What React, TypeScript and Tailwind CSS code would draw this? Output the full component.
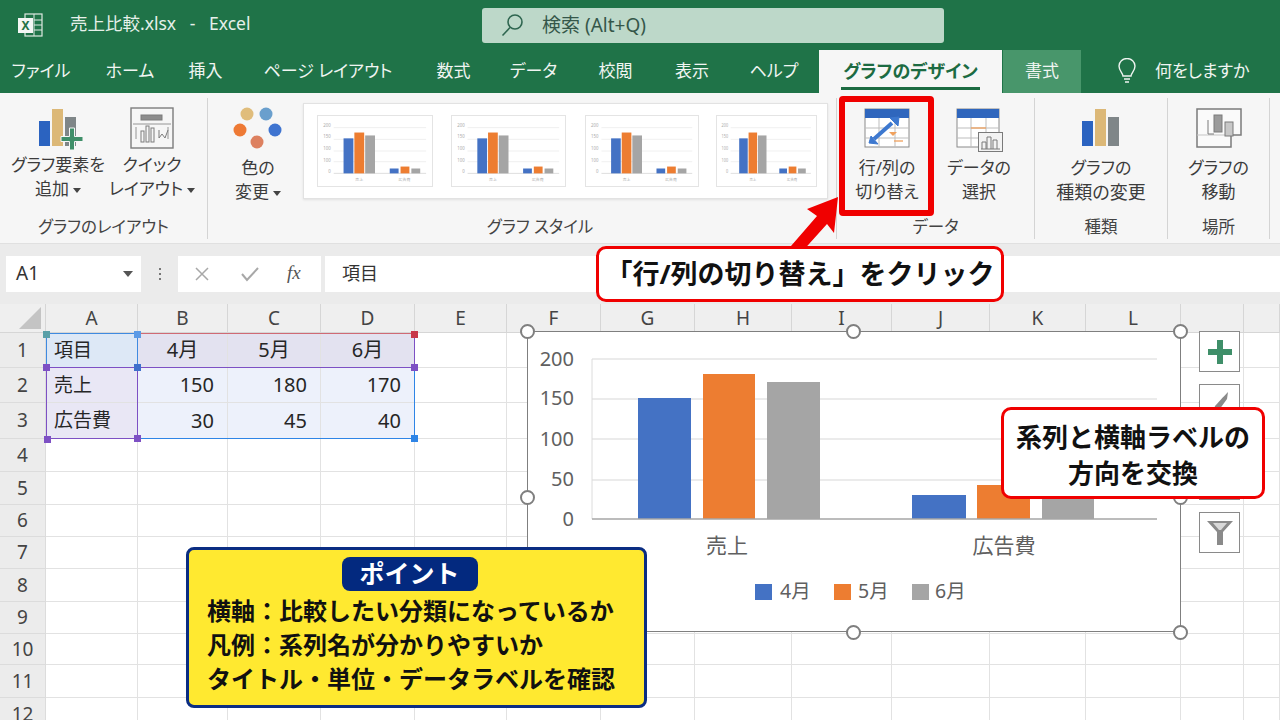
import React from "react";

const tabs = [
  { label: "ファイル", w: "w-[82px]" },
  { label: "ホーム", w: "w-[96px]" },
  { label: "挿入", w: "w-[55px]" },
  { label: "ページ レイアウト", w: "w-[190px]" },
  { label: "数式", w: "w-[61px]" },
  { label: "データ", w: "w-[99px]" },
  { label: "校閲", w: "w-[65px]" },
  { label: "表示", w: "w-[88px]" },
  { label: "ヘルプ", w: "w-[76px]" },
];

const columns = ["", "A", "B", "C", "D", "E", "F", "G", "H", "I", "J", "K", "L", "", ""];
const rowNumbers = [1, 2, 3, 4, 5, 6, 7, 8, 9, 10, 11, 12];

// tint of the highlighted data range, by row then column
const tints = [
  ["bg-[#dde8f6]", "bg-[#e3e2f0]", "bg-[#e3e2f0]", "bg-[#e3e2f0]"],
  ["bg-[#e9e7f5]", "bg-[#edf1fb]", "bg-[#edf1fb]", "bg-[#edf1fb]"],
  ["bg-[#e9e7f5]", "bg-[#edf1fb]", "bg-[#edf1fb]", "bg-[#edf1fb]"],
];

const cells = [
  [
    { text: "項目", cls: "pl-2 text-left text-[19px]" },
    { text: "4月", cls: "text-center" },
    { text: "5月", cls: "text-center" },
    { text: "6月", cls: "text-center" },
  ],
  [
    { text: "売上", cls: "pl-2 text-left text-[19px]" },
    { text: "150", cls: "pr-[13px] text-right" },
    { text: "180", cls: "pr-[13px] text-right" },
    { text: "170", cls: "pr-[13px] text-right" },
  ],
  [
    { text: "広告費", cls: "pl-2 text-left text-[19px]" },
    { text: "30", cls: "pr-[13px] text-right" },
    { text: "45", cls: "pr-[13px] text-right" },
    { text: "40", cls: "pr-[13px] text-right" },
  ],
];

const BLUE = "#4472c4";
const ORANGE = "#ed7d31";
const GRAY = "#a5a5a5";

const MiniChart = ({ width }: { width: number }) => (
  <svg width={width} height={72} viewBox="0 0 116 72" preserveAspectRatio="none" className="border border-[#e4e4e4] bg-white">
    {[12, 24, 36, 47].map((y) => (
      <line key={y} x1="16" x2="110" y1={y} y2={y} stroke="#efefef" strokeWidth="1" />
    ))}
    {["200", "150", "100", "100", "0"].map((t, i) => (
      <text key={i} x="13" y={11 + i * 12} fontSize="4.5" textAnchor="end" fill="#aaa">
        {t}
      </text>
    ))}
    <line x1="16" x2="110" y1="59" y2="59" stroke="#ddd" />
    <rect x="26" y="23" width="10" height="36" fill={BLUE} />
    <rect x="37" y="17" width="10" height="42" fill={ORANGE} />
    <rect x="48" y="20" width="10" height="39" fill={GRAY} />
    <rect x="73" y="54" width="9" height="5" fill={BLUE} />
    <rect x="84" y="52" width="9" height="7" fill={ORANGE} />
    <rect x="95" y="54" width="9" height="5" fill={GRAY} />
    <text x="42" y="67" fontSize="4" textAnchor="middle" fill="#aaa">売上</text>
    <text x="88" y="67" fontSize="4" textAnchor="middle" fill="#aaa">広告費</text>
  </svg>
);

const BarsIcon = () => (
  <svg width="38" height="38" viewBox="0 0 38 38">
    <rect x="0" y="12" width="11" height="25" fill="#2b63c0" />
    <rect x="13" y="0" width="11" height="37" fill="#dcb877" />
    <rect x="26" y="8" width="11" height="29" fill="#7f8688" />
  </svg>
);

const Caret = () => <span className="ml-1 inline-block border-x-[4px] border-t-[5px] border-x-transparent border-t-[#444] align-middle" />;

const RibbonButton = ({ icon, lines, caret, cls, textCls = "mt-[2px]" }: { icon: React.ReactNode; lines: React.ReactNode[]; caret?: boolean; cls: string; textCls?: string }) => (
  <div className={`flex flex-col items-center ${cls}`}>
    <div className="flex h-[56px] w-full items-center justify-center pt-[4px]">{icon}</div>
    <div className={`whitespace-nowrap text-center text-[17px] leading-[24px] text-[#3c3c3c] ${textCls}`}>
      <div>{lines[0]}</div>
      <div>
        {lines[1]}
        {caret && <Caret />}
      </div>
    </div>
  </div>
);

const Group = ({ label, cls, labelCls = "", children }: { label: string; cls: string; labelCls?: string; children: React.ReactNode }) => (
  <div className={`flex h-full shrink-0 flex-col border-r border-[#d4d4d4] ${cls}`}>
    <div className="flex h-[122px] items-start">{children}</div>
    <div className={`text-center text-[16.5px] leading-[24px] text-[#444] ${labelCls}`}>{label}</div>
  </div>
);

const Handle = ({ cls }: { cls: string }) => (
  <div className={`absolute h-[15px] w-[15px] rounded-full border-[2px] border-[#7f7f7f] bg-white ${cls}`} />
);

const Dot = ({ cls }: { cls: string }) => <div className={`absolute h-[7px] w-[7px] ${cls}`} />;

export default function App() {
  return (
    <div className="relative h-[720px] w-[1280px] overflow-hidden bg-white font-['Noto_Sans','Noto_Sans_CJK_JP',sans-serif] text-[#262626] [font-feature-settings:'palt']">
      {/* title bar */}
      <div className="flex h-[50px] items-center bg-[#1f7348] text-[#e6f0ea]">
        <svg width="26" height="24" viewBox="0 0 26 24" className="ml-[17px]">
          <rect x="8" y="1" width="17" height="22" fill="none" stroke="#dfe9e3" strokeWidth="1.2" />
          <path d="M17 1v22M17 7h8M17 12h8M17 17h8" stroke="#dfe9e3" strokeWidth="1" />
          <rect x="1" y="5" width="15" height="15" fill="#f4f7f5" />
          <text x="8.5" y="17" fontSize="12" fontWeight="700" textAnchor="middle" fill="#1f7348">X</text>
        </svg>
        <span className="ml-[27px] w-[412px] whitespace-pre pb-[3px] text-[17.5px]">売上比較.xlsx   -   Excel</span>
        <div className="flex h-[35px] w-[462px] items-center rounded-[3px] bg-[#bdd8c9] text-[#35574a]">
          <svg width="24" height="24" viewBox="0 0 24 24" className="ml-[19px]" fill="none" stroke="#2f6650" strokeWidth="1.6">
            <circle cx="14" cy="9" r="7" />
            <path d="M9 14.5 1.5 22.5" />
          </svg>
          <span className="ml-[17px] text-[19px]">検索 (Alt+Q)</span>
        </div>
      </div>

      {/* tabs */}
      <div className="flex h-[43px] items-stretch bg-[#1f7348] text-[17px] text-[#f0f5f2]">
        {tabs.map((t) => (
          <div key={t.label} className={`flex items-center justify-center whitespace-nowrap pb-[2px] ${t.w}`}>
            {t.label}
          </div>
        ))}
        <div className="ml-[7px] flex w-[183px] flex-col items-center bg-[#f6f6f6] pt-[9px]">
          <span className="border-b-[3px] border-[#1c6b42] px-[2px] pb-[3px] text-[18px] font-bold leading-[25px] text-[#1c6b42]">グラフのデザイン</span>
        </div>
        <div className="ml-px flex w-[78px] items-center justify-center bg-[#48966b] pb-[2px]">書式</div>
        <svg width="24" height="26" viewBox="0 0 24 26" className="ml-[34px] mt-[8px]" fill="none" stroke="#eef4f0" strokeWidth="1.4">
          <path d="M8 18c0-3-4-5-4-10a8 7.5 0 0 1 16 0c0 5-4 7-4 10z" />
          <path d="M9 21h6M10 24h4" />
        </svg>
        <div className="ml-[16px] flex items-center pb-[2px]">何をしますか</div>
      </div>

      {/* ribbon */}
      <div className="flex h-[150px] bg-[#f6f6f6] pb-[4px] pt-[5px]">
        <Group label="グラフのレイアウト" cls="w-[208px]">
          <RibbonButton
            cls="ml-[8px] w-[100px]"
            lines={["グラフ要素を", "追加"]}
            caret
            textCls="-mt-px"
            icon={
              <div className="relative">
                <BarsIcon />
                <svg width="24" height="24" viewBox="0 0 24 24" className="absolute left-[21px] top-[18px]">
                  <path d="M9.5 1h5v8.5H23v5h-8.500V23h-5v-8.500H1v-5h8.500z" fill="#3f8f69" stroke="#f6f6f6" strokeWidth="1" />
                </svg>
              </div>
            }
          />
          <RibbonButton
            cls="w-[88px]"
            lines={["クイック", "レイアウト"]}
            caret
            textCls="-mt-px"
            icon={
              <svg width="44" height="42" viewBox="0 0 44 42" fill="none" stroke="#7d7d7d">
                <rect x="1" y="1" width="42" height="40" strokeWidth="1.4" />
                <rect x="11" y="8" width="21" height="5" fill="#8d8d8d" />
                <path d="M3 17h38M6 20v12M38 20v12" strokeWidth="0.8" />
                <rect x="11" y="24" width="3" height="11" />
                <rect x="16" y="19" width="3" height="16" />
                <rect x="21" y="21" width="3" height="14" />
                <path d="M29 23v8l3-4 3 4 3-8" />
              </svg>
            }
          />
        </Group>

        <Group label="グラフ スタイル" cls="w-[629px]" labelCls="pl-[36px]">
          <RibbonButton
            cls="ml-[5px] w-[90px]"
            lines={["色の", "変更"]}
            caret
            icon={
              <svg width="50" height="46" viewBox="0 0 50 46">
                <circle cx="14" cy="9" r="6.500" fill="#e0bd7c" />
                <circle cx="33" cy="9" r="6.500" fill="#6a9fcd" />
                <circle cx="7" cy="25" r="6.500" fill="#ee7a35" />
                <circle cx="42" cy="25" r="6.500" fill="#3f74d0" />
                <circle cx="24" cy="37" r="6.500" fill="#dd8160" />
              </svg>
            }
          />
          <div className="ml-[0px] mt-[5px] flex h-[96px] w-[525px] items-center border border-[#e2e2e2] bg-white pl-[13px] shadow-[0_1px_2px_#e0e0e0]">
            <MiniChart width={116} />
            <div className="ml-[18px]"><MiniChart width={115} /></div>
            <div className="ml-[19px]"><MiniChart width={114} /></div>
            <div className="ml-[17px]"><MiniChart width={101} /></div>
          </div>
        </Group>

        <Group label="データ" cls="w-[198px]">
          <RibbonButton
            cls="ml-[4px] w-[92px]"
            lines={["行/列の", "切り替え"]}
            icon={
              <svg width="46" height="40" viewBox="0 0 46 40" fill="none">
                <rect x="1" y="1" width="44" height="38" fill="#fff" stroke="#8a8a8a" />
                <rect x="1" y="1" width="44" height="9" fill="#2f66bd" />
                <path d="M1 20h44M1 30h44M15 10v29M31 10v29" stroke="#bdbdbd" />
                <path d="M30 33h9" stroke="#f0a15d" strokeWidth="1.300" />
                <path d="M25 24h8l-4 4z" fill="#f0a15d" />
                <path d="M10 31 28 15" stroke="#3d78cf" strokeWidth="4" />
                <path d="M26 10l9-1-1 9zM5 35l9 1-7-8z" fill="#3d78cf" stroke="#3d78cf" />
              </svg>
            }
          />
          <RibbonButton
            cls="w-[92px]"
            lines={["データの", "選択"]}
            icon={
              <div className="relative h-[40px] w-[46px]">
                <svg width="46" height="40" viewBox="0 0 46 40" fill="none">
                  <rect x="1" y="1" width="42" height="38" fill="#fff" stroke="#8a8a8a" />
                  <rect x="1" y="1" width="42" height="9" fill="#2f66bd" />
                  <path d="M1 20h42M1 30h42M15 10v29M30 10v29" stroke="#bdbdbd" />
                  <path d="M15 20h15" stroke="#f0a15d" strokeWidth="1.300" />
                </svg>
                <svg width="25" height="20" viewBox="0 0 25 20" fill="none" stroke="#7a7a7a" className="absolute left-[22px] top-[24px] bg-[#f3f3f3]">
                  <rect x="0.500" y="0.500" width="24" height="19" />
                  <path d="M4 17v-7h4v7M9 17V5h4v12M15 17V8h4v9" />
                  <path d="M3 17h19" />
                </svg>
              </div>
            }
          />
        </Group>

        <Group label="種類" cls="w-[133px]">
          <RibbonButton cls="w-full" lines={["グラフの", <span key="kind" className="text-[18px]">種類の変更</span>]} icon={<BarsIcon />} />
        </Group>

        <Group label="場所" cls="w-[102px]">
          <RibbonButton
            cls="w-full"
            lines={["グラフの", "移動"]}
            icon={
              <svg width="46" height="40" viewBox="0 0 46 40" fill="none" stroke="#7b7b7b">
                <path d="M1 1h44v26h-10v12H1z" strokeWidth="1.500" fill="#fafafa" />
                <path d="M1 27h34" stroke="#c5c5c5" />
                <rect x="18" y="7" width="8" height="17" fill="#9b9b9b" />
                <rect x="29" y="14" width="8" height="14" fill="#c8c8c8" />
                <path d="M12 12v14h6" />
              </svg>
            }
          />
        </Group>
      </div>

      {/* formula bar */}
      <div className="flex h-[61px] items-center gap-[4px] border-t border-[#e0e0e0] bg-[#ebebeb] pb-[1px] pl-[6px] text-[#333]">
        <div className="flex h-[36px] w-[135px] items-center justify-between bg-white pl-[10px] pr-[8px] text-[19px]">
          A1
          <span className="border-x-[5px] border-t-[6px] border-x-transparent border-t-[#555]" />
        </div>
        <div className="ml-[10px] mr-[9px] flex w-[10px] flex-col items-center gap-[3px]">
          <i className="h-[2px] w-[2px] bg-[#777]" />
          <i className="h-[2px] w-[2px] bg-[#777]" />
          <i className="h-[2px] w-[2px] bg-[#777]" />
        </div>
        <div className="flex h-[36px] w-[143px] items-center bg-white text-[#a8a8a8]">
          <svg width="16" height="16" viewBox="0 0 16 16" className="ml-[16px]" stroke="#a8a8a8" strokeWidth="1.500">
            <path d="M2 2l12 12M14 2 2 14" />
          </svg>
          <svg width="20" height="16" viewBox="0 0 20 16" className="ml-[30px]" fill="none" stroke="#a8a8a8" strokeWidth="2">
            <path d="M2 8l5 6L18 2" />
          </svg>
          <span className="ml-[27px] font-['Liberation_Serif',serif] text-[19px] italic text-[#555]">fx</span>
        </div>
        <div className="flex h-[36px] flex-1 items-center bg-white pl-[17px] text-[18px]">項目</div>
      </div>

      {/* sheet */}
      <div className="grid grid-cols-[46px_92px_90px_93px_94px_92px_94px_94px_97px_100px_98px_96px_95px_63px_36px] grid-rows-[29px_35px_35px_36px_33px_33px_32px_32px_33px_32px_31px_33px_33px]">
        {columns.map((c, i) => (
          <div key={i} className="relative flex items-center justify-center border-b border-r border-[#d6d6d6] bg-[#efefef] text-[19px] text-[#444]">
            {i === 0 ? <span className="absolute bottom-[3px] right-[4px] h-0 w-0 border-b-[22px] border-l-[22px] border-b-[#c4c4c4] border-l-transparent" /> : c}
          </div>
        ))}
        {rowNumbers.map((n, r) => (
          <React.Fragment key={n}>
            <div className="flex items-center justify-center border-b border-r border-[#dcdcdc] bg-[#ececec] text-[19px] text-[#444]">{n}</div>
            {columns.slice(1).map((_, c) => {
              const cell = cells[r]?.[c];
              return (
                <div
                  key={c}
                  className={`flex items-center border-b border-r border-[#e2e2e2] text-[20px] leading-none ${tints[r]?.[c] ?? ""}`}
                >
                  {cell && <span className={`w-full ${cell.cls}`}>{cell.text}</span>}
                </div>
              );
            })}
          </React.Fragment>
        ))}
      </div>

      {/* range highlight around A1:D3 */}
      <div className="absolute left-[46px] top-[333px] h-[35px] w-[92px] border-[1.500px] border-b-0 border-[#3f8ae0]" />
      <div className="absolute left-[138px] top-[333px] h-0 w-[277px] border-t-[1.500px] border-[#d06a74]" />
      <div className="absolute left-[46px] top-[367px] h-[72px] w-[92px] border-[1.500px] border-[#7d50c4]" />
      <div className="absolute left-[138px] top-[367px] h-0 w-[277px] border-t-[1.500px] border-[#7d50c4]" />
      <div className="absolute left-[414px] top-[333px] h-[35px] w-0 border-l-[1.500px] border-[#7d50c4]" />
      <div className="absolute left-[414px] top-[368px] h-[71px] w-0 border-l-[1.500px] border-[#2f85e6]" />
      <div className="absolute left-[138px] top-[438px] h-0 w-[277px] border-t-[1.500px] border-[#2f85e6]" />
      <Dot cls="left-[43px] top-[331px] bg-[#5aa0a8]" />
      <Dot cls="left-[134px] top-[331px] bg-[#5d9be6]" />
      <Dot cls="left-[411px] top-[331px] bg-[#c8384a]" />
      <Dot cls="left-[43px] top-[364px] bg-[#7d50c4]" />
      <Dot cls="left-[134px] top-[364px] bg-[#3f70cc]" />
      <Dot cls="left-[411px] top-[364px] bg-[#7d50c4]" />
      <Dot cls="left-[44px] top-[436px] bg-[#7d50c4]" />
      <Dot cls="left-[134px] top-[435px] bg-[#7d50c4]" />
      <Dot cls="left-[411px] top-[435px] bg-[#2f85e6]" />

      {/* chart */}
      <div className="absolute left-[527px] top-[331px] h-[301px] w-[654px] border-[1.500px] border-[#7f7f7f] bg-white">
        <svg width="654" height="301" viewBox="527 331 654 301" className="absolute left-[-1.500px] top-[-1.500px]">
          {[359, 399, 439, 480].map((y) => (
            <line key={y} x1="592" x2="1157" y1={y} y2={y} stroke="#e4e4e4" strokeWidth="1.500" />
          ))}
          <line x1="592" x2="592" y1="359" y2="519" stroke="#dcdcdc" />
          <rect x="638" y="398" width="53" height="121" fill={BLUE} />
          <rect x="703" y="374" width="52" height="145" fill={ORANGE} />
          <rect x="767" y="382" width="53" height="137" fill={GRAY} />
          <rect x="912" y="495" width="54" height="24" fill={BLUE} />
          <rect x="977" y="485" width="53" height="34" fill={ORANGE} />
          <rect x="1042" y="489" width="52" height="30" fill={GRAY} />
          <line x1="592" x2="1157" y1="519" y2="519" stroke="#a6a6a6" strokeWidth="1.500" />
          {[
            ["200", 366],
            ["150", 405],
            ["100", 446],
            ["50", 486],
            ["0", 526],
          ].map(([t, y]) => (
            <text key={t} x="574" y={y} textAnchor="end" fontSize="20" fill="#606060">
              {t}
            </text>
          ))}
          <text x="727" y="553" textAnchor="middle" fontSize="21" fill="#606060">売上</text>
          <text x="1004" y="553" textAnchor="middle" fontSize="21" fill="#606060">広告費</text>
          <rect x="755" y="584" width="17" height="16" fill={BLUE} />
          <text x="780" y="598" fontSize="19.500" fill="#606060">4月</text>
          <rect x="834" y="584" width="17" height="16" fill={ORANGE} />
          <text x="858" y="598" fontSize="19.500" fill="#606060">5月</text>
          <rect x="912" y="584" width="17" height="16" fill={GRAY} />
          <text x="935" y="598" fontSize="19.500" fill="#606060">6月</text>
        </svg>
      </div>
      <Handle cls="left-[520px] top-[324px]" />
      <Handle cls="left-[846px] top-[324px]" />
      <Handle cls="left-[1173px] top-[324px]" />
      <Handle cls="left-[520px] top-[490px]" />
      <Handle cls="left-[1173px] top-[490px]" />
      <Handle cls="left-[846px] top-[625px]" />
      <Handle cls="left-[1173px] top-[625px]" />

      {/* chart side buttons */}
      <div className="absolute left-[1199px] top-[331px] flex h-[41px] w-[41px] items-center justify-center border border-[#8a8a8a] bg-white">
        <svg width="26" height="26" viewBox="0 0 26 26">
          <path d="M10 1h6v9h9v6h-9v9h-6v-9H1v-6h9z" fill="#3f8f69" />
        </svg>
      </div>
      <div className="absolute left-[1199px] top-[384px] flex h-[41px] w-[41px] justify-center border border-[#8a8a8a] bg-white pt-[6px]">
        <svg width="24" height="30" viewBox="0 0 24 30">
          <path d="M20 1C15 6 10 12 7 15l-2 7 6-3 8-11z" fill="#8a8a8a" />
        </svg>
      </div>
      <div className="absolute left-[1199px] top-[448px] h-[52px] w-[41px] border border-[#8a8a8a] bg-white" />
      <div className="absolute left-[1199px] top-[512px] flex h-[41px] w-[41px] items-center justify-center border border-[#8a8a8a] bg-white">
        <svg width="28" height="26" viewBox="0 0 28 26">
          <path d="M1 1h26L17 12v13h-6V12z" fill="#8a8a8a" />
          <path d="M7 3h14l-6 7h-2z" fill="#d8d8d8" />
        </svg>
      </div>

      {/* red highlight + arrow */}
      <svg width="70" height="70" viewBox="0 0 70 70" className="absolute left-[780px] top-[190px]">
        <path d="M58 7 27 19l10 7-26 30 9 8 27-30 7 9z" fill="#f00000" />
      </svg>
      <div className="absolute left-[839px] top-[96px] h-[120px] w-[95px] rounded-[4px] border-[6px] border-[#f00000]" />

      {/* callouts */}
      <div className="absolute left-[596px] top-[246px] flex h-[56px] w-[408px] items-center justify-center whitespace-nowrap rounded-[10px] border-[3.500px] border-[#f00000] bg-white text-[27px] font-bold text-[#111] [font-feature-settings:normal]">
        「行/列の切り替え」をクリック
      </div>
      <div className="absolute left-[1001px] top-[407px] flex h-[92px] w-[264px] flex-col items-center justify-center whitespace-nowrap rounded-[10px] border-[3.500px] border-[#f00000] bg-white pt-[3px] text-[26px] font-bold leading-[36px] text-[#111] [font-feature-settings:normal]">
        <div>系列と横軸ラベルの</div>
        <div>方向を交換</div>
      </div>

      {/* point box */}
      <div className="absolute left-[186px] top-[547px] flex h-[161px] w-[461px] flex-col rounded-[8px] border-[3.500px] border-[#0b2d82] bg-[#ffe930] px-[18px] text-[24px] font-bold text-[#111] [font-feature-settings:normal]">
        <div className="mr-[14px] mt-[7px] flex h-[34px] w-[136px] items-center justify-center self-center rounded-[8px] bg-[#03297f] text-[25px] text-white">ポイント</div>
        <div className="mt-[3px] whitespace-nowrap leading-[34px]">横軸：比較したい分類になっているか</div>
        <div className="whitespace-nowrap leading-[33px]">凡例：系列名が分かりやすいか</div>
        <div className="whitespace-nowrap leading-[36px]">タイトル・単位・データラベルを確認</div>
      </div>
    </div>
  );
}
